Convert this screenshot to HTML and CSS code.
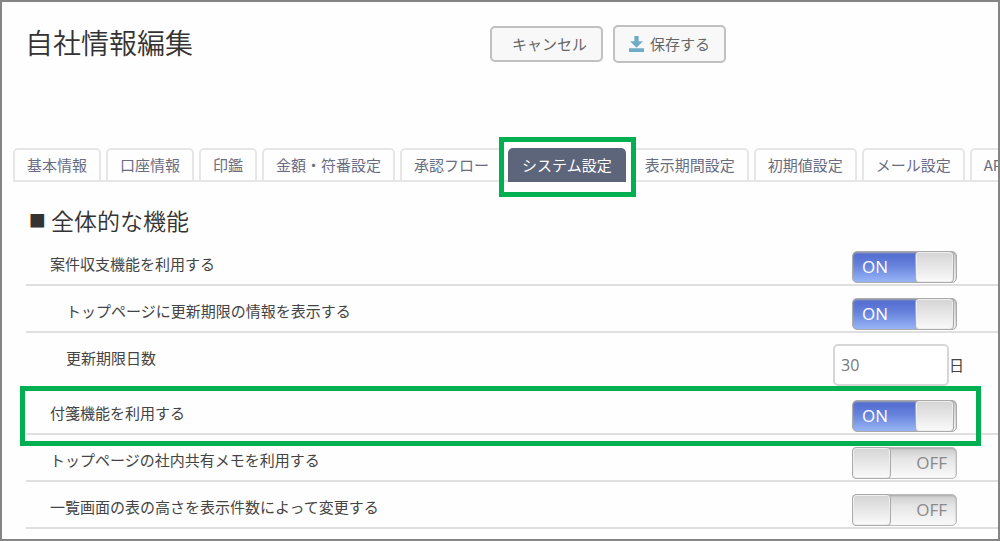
FILE: index.html
```html
<!DOCTYPE html>
<html lang="ja">
<head>
<meta charset="utf-8">
<title>自社情報編集</title>
<link rel="stylesheet" href="styles.css">
</head>
<body>
<header class="page-header">
  <h1 class="page-title">自社情報編集</h1>
  <div class="actions">
    <button type="button" class="btn btn-cancel">キャンセル</button>
    <button type="button" class="btn btn-save">
      <svg class="save-icon" viewBox="0 0 14 15" aria-hidden="true"><path d="M5 0h4v5h4L7 11 1 5h4zM0 11.500h14V15H0z"/></svg>
      保存する
    </button>
  </div>
</header>
<nav class="tabs">
  <a class="tab" href="#">基本情報</a>
  <a class="tab" href="#">口座情報</a>
  <a class="tab" href="#">印鑑</a>
  <a class="tab" href="#">金額・符番設定</a>
  <a class="tab" href="#">承認フロー</a>
  <a class="tab tab-active" href="#" aria-current="page">システム設定</a>
  <a class="tab" href="#">表示期間設定</a>
  <a class="tab" href="#">初期値設定</a>
  <a class="tab" href="#">メール設定</a>
  <a class="tab" href="#">AP</a>
</nav>
<main class="settings">
  <h2 class="section-title"><span class="square">■</span>全体的な機能</h2>
  <div class="row">
    <label class="row-label" for="balance">案件収支機能を利用する</label>
    <div class="control"><span class="toggle"><input class="toggle-input" type="checkbox" id="balance" checked><span class="on">ON</span><span class="off">OFF</span><span class="knob"></span></span></div>
  </div>
  <div class="row">
    <label class="row-label nested" for="renewal">トップページに更新期限の情報を表示する</label>
    <div class="control"><span class="toggle"><input class="toggle-input" type="checkbox" id="renewal" checked><span class="on">ON</span><span class="off">OFF</span><span class="knob"></span></span></div>
  </div>
  <div class="row row-days">
    <label class="row-label nested" for="days">更新期限日数</label>
    <div class="control control-days"><input class="days" type="text" id="days" value="30"><span class="unit">日</span></div>
  </div>
  <div class="row row-marked">
    <label class="row-label" for="sticky">付箋機能を利用する</label>
    <div class="control"><span class="toggle"><input class="toggle-input" type="checkbox" id="sticky" checked><span class="on">ON</span><span class="off">OFF</span><span class="knob"></span></span></div>
  </div>
  <div class="row">
    <label class="row-label" for="memo">トップページの社内共有メモを利用する</label>
    <div class="control"><span class="toggle"><input class="toggle-input" type="checkbox" id="memo"><span class="on">ON</span><span class="off">OFF</span><span class="knob"></span></span></div>
  </div>
  <div class="row">
    <label class="row-label" for="height">一覧画面の表の高さを表示件数によって変更する</label>
    <div class="control"><span class="toggle"><input class="toggle-input" type="checkbox" id="height"><span class="on">ON</span><span class="off">OFF</span><span class="knob"></span></span></div>
  </div>
</main>
</body>
</html>
```
FILE: styles.css
```css
* { box-sizing: border-box; }

body {
  margin: 0;
  min-height: 100vh;
  border: 2px solid #858585;
  background: #fefefe;
  color: #444;
  font: 15px/20px "Noto Sans CJK JP", sans-serif;
}

.page-header {
  display: grid;
  grid-template-columns: 49% 1fr;
  align-items: start;
  padding-top: 23px;
}

.page-title {
  margin: 0;
  padding-left: 23px;
  color: #333;
  font-size: 28px;
  font-weight: 350;
  line-height: 34px;
}

.actions { display: flex; align-items: center; gap: 10px; }

.btn {
  display: flex;
  align-items: center;
  gap: 6px;
  height: 36px;
  padding: 0 14px;
  border: 2px solid #c0c0c0;
  border-radius: 5px;
  background: #f8f8f8;
  color: #666;
  font: inherit;
}

.btn-cancel { padding-left: 20px; }
.btn-save { height: 38px; }
.save-icon { width: 15px; height: 16px; fill: #6fabc6; }

.tabs {
  display: flex;
  gap: 5px;
  margin-top: 85px;
  padding-left: 11px;
  overflow-x: clip;
}

.tab {
  position: relative;
  flex: none;
  height: 34px;
  padding: 5px 12px;
  border: 2px solid #e6e6e6;
  border-radius: 5px 5px 0 0;
  color: #6a6d82;
  text-decoration: none;
  white-space: nowrap;
}

/* Baseline bridging the space up to the next tab */
.tab:not(.tab-active)::before {
  content: "";
  position: absolute;
  right: -7px;
  bottom: -2px;
  width: 5px;
  height: 2px;
  background: #e6e6e6;
}

.tab-active {
  z-index: 1;
  border-color: #5d657a;
  background: #5d657a;
  color: #fff;
}

.tab-active::after,
.row-marked::after {
  content: "";
  position: absolute;
  border: 5px solid #00b050;
  pointer-events: none;
}

.tab-active::after { inset: -13px -12px -17px -11px; }

.settings { padding: 18px 0 9px 24px; }

.section-title {
  display: flex;
  align-items: center;
  height: 39px;
  margin: 0;
  padding-left: 3px;
  color: #333;
  font-size: 23px;
  font-weight: 350;
  line-height: 38px;
}

.square {
  width: 22px;
  font-family: "DejaVu Sans", sans-serif;
  font-size: 28px;
}

.row {
  position: relative;
  display: flex;
  justify-content: space-between;
  align-items: flex-start;
  border-bottom: 2px solid #dfdfdf;
  padding-top: 11px;
}

.row-label { padding-left: 24px; line-height: 28px; }
.nested { padding-left: 40px; }
.control { padding: 1px 41px 1px 0; }

.toggle {
  position: relative;
  display: flex;
  justify-content: space-between;
  align-items: center;
  width: 105px;
  height: 32px;
  padding: 2px 9px;
  border: 1px solid #bbb;
  border-radius: 5px;
  background: linear-gradient(#ccc, #e5e5e5 35%, #fafafa);
  box-shadow: inset 0 1px 2px #aaa;
  color: #8a8a8a;
  font: 17px/28px "Open Sans", sans-serif;
}

.toggle:has(:checked) {
  border-color: #aaa;
  background:
    linear-gradient(#4f69cf, #6682dc 45%, #98b5f6) left / 66px 100% no-repeat,
    linear-gradient(#ccc, #fafafa);
}

.toggle-input {
  position: absolute;
  inset: 0;
  z-index: 2;
  width: 100%;
  height: 100%;
  margin: 0;
  opacity: 0;
}

.on { color: #fff; }
.off { margin-left: auto; }
.toggle:not(:has(:checked)) .on,
.toggle:has(:checked) .off { display: none; }

.knob {
  position: absolute;
  top: -1px;
  bottom: -1px;
  left: -1px;
  width: 39px;
  border: 1px solid #aaa;
  border-radius: 4px;
  background: linear-gradient(#d4d4d4, #fafafa);
  box-shadow: inset 0 0 0 1px #eee;
}

.toggle:has(:checked) .knob { left: 62px; }

.row-days { border-bottom-color: transparent; }

.control-days {
  display: flex;
  align-items: center;
  padding: 0 34px 0 0;
}

.days {
  width: 116px;
  height: 42px;
  padding: 0 6px;
  border: 2px solid #d6d6d6;
  border-radius: 5px;
  background: #fff;
  color: #777;
  font: 16px/20px "Open Sans", sans-serif;
}

.row-marked { z-index: 1; }
.row-marked::after { inset: -2px 17px -13px -6px; }
```
